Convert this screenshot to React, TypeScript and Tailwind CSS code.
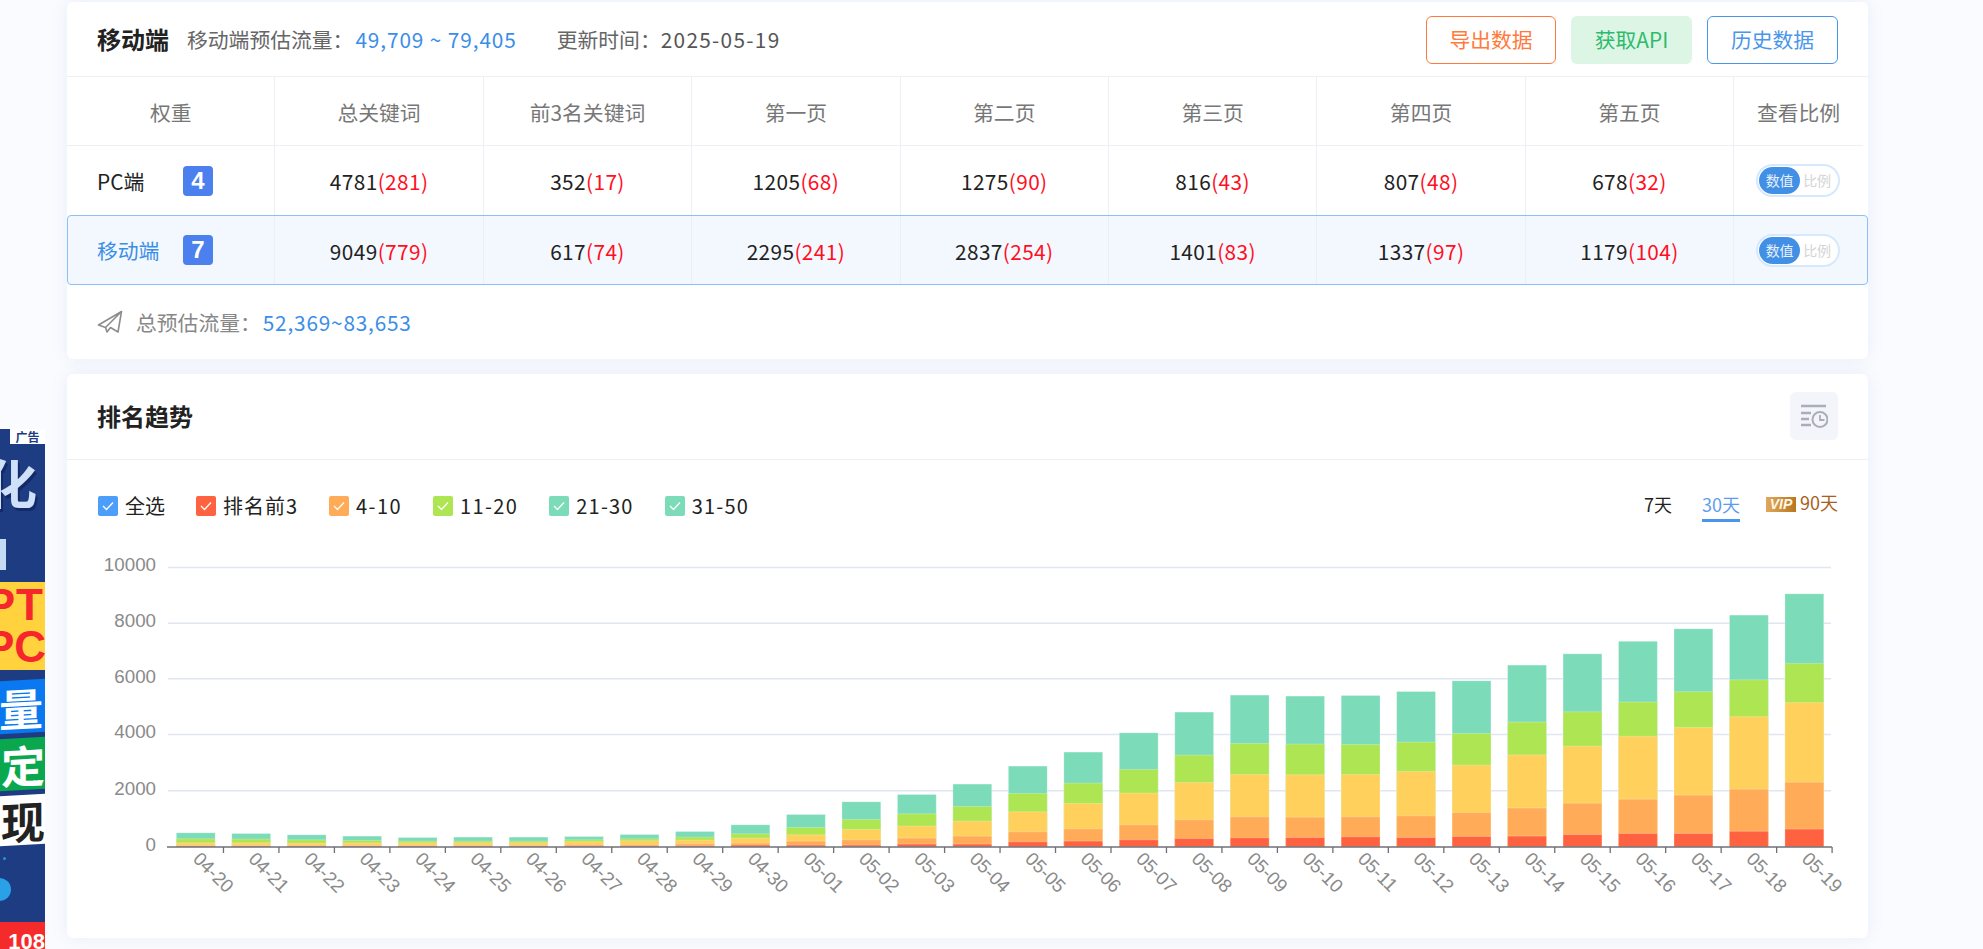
import type { ReactNode } from "react";

const FONT = "font-['Noto_Sans_CJK_SC','Liberation_Sans',sans-serif]";

const COLS = ["总关键词", "前3名关键词", "第一页", "第二页", "第三页", "第四页", "第五页"];

const ROWS = [
  {
    name: "PC端",
    weight: "4",
    active: false,
    cells: [["4781", "281"], ["352", "17"], ["1205", "68"], ["1275", "90"], ["816", "43"], ["807", "48"], ["678", "32"]],
  },
  {
    name: "移动端",
    weight: "7",
    active: true,
    cells: [["9049", "779"], ["617", "74"], ["2295", "241"], ["2837", "254"], ["1401", "83"], ["1337", "97"], ["1179", "104"]],
  },
];

const LEGEND = [
  { label: "全选", box: "bg-[#4d9dfb]", track: "tracking-[0px]" },
  { label: "排名前3", box: "bg-[#ff6240]", track: "tracking-[1px]" },
  { label: "4-10", box: "bg-[#ffab58]", track: "tracking-[1.4px]" },
  { label: "11-20", box: "bg-[#aee552]", track: "tracking-[1.4px]" },
  { label: "21-30", box: "bg-[#7cdbb9]", track: "tracking-[1.2px]" },
  { label: "31-50", box: "bg-[#7cdbb9]", track: "tracking-[1.2px]" },
];

const DATES = [
  "04-20", "04-21", "04-22", "04-23", "04-24", "04-25", "04-26", "04-27", "04-28", "04-29", "04-30",
  "05-01", "05-02", "05-03", "05-04", "05-05", "05-06", "05-07", "05-08", "05-09", "05-10", "05-11",
  "05-12", "05-13", "05-14", "05-15", "05-16", "05-17", "05-18", "05-19",
];

// stacked heights in px, top of the stack first: teal, green, yellow, orange, red
const BARS = [
  [14, 8, 4, 1.5, 0.5], [13.3, 7.7, 4, 1.5, 0.5], [12, 7, 3.7, 1.5, 0.5], [10.7, 6.3, 4, 1.5, 0.5],
  [9.3, 5.7, 4, 1.5, 0.5], [9.7, 5.7, 4, 1.5, 0.5], [9.7, 5.7, 4, 1.5, 0.5], [10.3, 7, 5, 2.3, 0.7],
  [12.3, 8, 6, 2.3, 0.7], [15.3, 9.7, 6.7, 3, 1], [22, 13, 8.7, 3.7, 1.7], [32.3, 19.3, 12, 5.7, 1.7],
  [45, 27.3, 17.3, 7, 1.7], [52.3, 33, 20.7, 8.7, 2.7], [62.7, 40.3, 25.7, 10.7, 2.7], [80.7, 53.3, 35, 15, 5],
  [94.7, 63.7, 43.3, 18, 5.7], [114, 77.3, 53.7, 22, 7], [134.7, 91.7, 64.3, 27, 8.3], [151.7, 103.3, 72.3, 30, 9],
  [150.7, 102.7, 72, 29.7, 9.3], [151.3, 102.3, 72.3, 30, 10], [155.3, 104.7, 75.3, 31, 9.3], [166, 113.3, 81.7, 34.3, 10.3],
  [181.7, 124.8, 91.9, 38.8, 10.7], [193, 135, 100.6, 43.6, 12.2], [205.5, 144.8, 110.5, 47.6, 13.3],
  [218, 155.1, 119.3, 51.7, 13.3], [231.7, 167, 130.1, 57.6, 15.5], [253, 183.4, 144.2, 64.6, 17.7],
];
const BAR_COLORS = ["#7cdbb9", "#aee552", "#ffd05b", "#ffab58", "#ff6240"];

const Y_TICKS = [
  { label: "10000", y: 567.4 },
  { label: "8000", y: 623.2 },
  { label: "6000", y: 678.8 },
  { label: "4000", y: 734.4 },
  { label: "2000", y: 790.8 },
  { label: "0", y: 846.8 },
];

function Cell({ children, last }: { children: ReactNode; last?: boolean }) {
  return (
    <div className={`flex items-center justify-center pt-[3px] ${last ? "" : "border-r border-[#eceff4]"}`}>{children}</div>
  );
}

function Toggle() {
  return (
    <div className="flex h-[33px] w-[84px] items-center rounded-full border-2 border-[#d6e8fb] bg-white pl-[1px]">
      <span className="flex h-[27px] w-[41px] items-center justify-center rounded-full bg-[#4290e5] text-[14px] text-[#e8f1fc]">
        数值
      </span>
      <span className="ml-[3px] text-[14px] text-[#d4d4d4]">比例</span>
    </div>
  );
}

function PlaneIcon() {
  return (
    <svg width="26" height="26" viewBox="0 0 26 26" fill="none" stroke="#8c8c8c" strokeWidth="1.6" strokeLinejoin="round">
      <path d="M24.5 2.5 1.5 16l7 2.5L24.5 2.5Z" />
      <path d="M24.5 2.5 21 23l-7.5-4.5-3.5 4.5-1.5-4.5" />
    </svg>
  );
}

function HistoryIcon() {
  return (
    <svg width="28" height="24" viewBox="0 0 28 24" fill="none" stroke="#a9aeb8" strokeWidth="2.4">
      <path d="M1 2h25M1 9h10M1 15h8M1 21h10" />
      <circle cx="20" cy="15.5" r="7.5" strokeWidth="2" />
      <path d="M20 11v5h4.5" strokeWidth="1.8" />
    </svg>
  );
}

function Check() {
  return (
    <svg width="12" height="10" viewBox="0 0 12 10" fill="none" stroke="#fff" strokeWidth="1.3">
      <path d="M1 5l3.5 3.5L11 1.5" />
    </svg>
  );
}

function Ad() {
  return (
    <aside className="mt-[429px] flex h-[520px] w-[45px] shrink-0 flex-col overflow-hidden bg-[#1e3c82] font-['Noto_Sans_CJK_SC',sans-serif] font-bold">
      <div className="flex h-[15px] justify-end">
        <span className="flex w-[35px] items-center justify-center bg-white text-[12px] leading-none text-[#1e3c82]">
          广告
        </span>
      </div>
      <div className="relative h-[138px]">
        <span className="absolute right-[8px] top-[8px] text-[52px] leading-[60px] text-[#cfe1f8] [text-shadow:2px_3px_0_#14296a]">
          化
        </span>
        <div className="absolute left-0 top-[95px] h-[31px] w-[6px] bg-[#c4daf5]" />
      </div>
      <div className="flex h-[88px] flex-col items-end justify-center bg-[#ffd23e] font-['Liberation_Sans',sans-serif] text-[44px] leading-[42px] text-[#f5262c]">
        <span className="mr-[1px] tracking-[1px]">PT</span>
        <span className="-mr-[1px]">PC</span>
      </div>
      <div className="mt-[10px] flex h-[53px] -skew-y-3 items-center justify-end bg-[#0a78f0] pr-[2px] text-[44px] leading-none text-white">
        量
      </div>
      <div className="mt-[5px] flex h-[52px] -skew-y-3 items-center justify-end bg-[#0aa84e] text-[44px] leading-none text-white">
        定
      </div>
      <div className="mt-[5px] flex h-[50px] -skew-y-3 items-center justify-end bg-white text-[44px] leading-none text-[#222]">
        现
      </div>
      <div className="relative flex-1">
        <div className="absolute -left-[12px] top-[33px] size-[23px] rounded-full bg-[#2aa0e6]" />
        <div className="absolute left-[3px] top-[12px] size-[3px] rounded-full bg-[#2e8fd8]" />
      </div>
      <div className="flex h-[27px] items-start justify-end overflow-hidden bg-[#f52a2a] pt-[9px] font-['Liberation_Sans',sans-serif] text-[22px] leading-none text-white">
        108
      </div>
    </aside>
  );
}

function Chart() {
  const step = 55.47;
  const barW = 38.8;
  return (
    <svg width="1801" height="398" viewBox="67 540 1801 398" className="block">
      {Y_TICKS.slice(0, 5).map((t) => (
        <line key={t.label} x1="168" x2="1831" y1={t.y} y2={t.y} stroke="#e0e6f1" strokeWidth="1.5" />
      ))}
      {Y_TICKS.map((t) => (
        <text key={t.label} x="156" y={t.y + 4} textAnchor="end" fontFamily="Liberation Sans" fontSize="18.75" fill="#8a8a8a">
          {t.label}
        </text>
      ))}
      {BARS.map((bar, i) => (
        <g key={DATES[i]}>
          {bar.map((h, s) => (
            <rect
              key={s}
              x={168 + i * step + (step - barW) / 2}
              y={846.8 - h}
              width={barW}
              height={h}
              fill={BAR_COLORS[s]}
              stroke="#fff"
              strokeOpacity="0.25"
            />
          ))}
        </g>
      ))}
      <line x1="167" x2="1832" y1="847" y2="847" stroke="#6e7079" strokeWidth="1.3" />
      {DATES.map((d, i) => (
        <line key={d} x1={168 + (i + 1) * step} x2={168 + (i + 1) * step} y1="847" y2="853" stroke="#6e7079" strokeWidth="1.3" />
      ))}
      {DATES.map((d, i) => {
        const x = 168 + i * step + 24;
        return (
          <text key={d} x={x} y="860" transform={`rotate(45 ${x} 860)`} fontFamily="Liberation Sans" fontSize="18.75" fill="#8a8a8a">
            {d}
          </text>
        );
      })}
    </svg>
  );
}

export default function App() {
  return (
    <div className={`flex h-[949px] w-[1983px] overflow-hidden bg-[#fafbfe] ${FONT}`}>
      <Ad />
      <main className="ml-[22px] flex w-[1801px] shrink-0 flex-col gap-[15px] pt-[2px]">
        {/* traffic table */}
        <section className="h-[357px] rounded-[6px] bg-white shadow-[0_0_16px_rgba(90,140,210,0.12)]">
          <div className="flex h-[75px] items-center border-b border-[#eceff4] px-[30px] pt-[2px] text-[20.8px]">
            <h2 className="-mt-[2px] text-[24px] font-bold text-[#222]">移动端</h2>
            <span className="ml-[18px] mr-[2px] text-[#666]">移动端预估流量：</span>
            <span className="tracking-[0.9px] text-[#3b8ee8]">49,709 ~ 79,405</span>
            <span className="ml-[40px] text-[#666]">更新时间：</span>
            <span className="tracking-[1.3px] text-[#555]">2025-05-19</span>
            <div className="ml-auto flex gap-[15px]">
              <button className="h-[48px] w-[130px] rounded-[6px] border border-[#ff7a3d] text-[#ff7a3d]">导出数据</button>
              <button className="h-[48px] w-[121px] rounded-[6px] bg-[#dcf5e5] text-[#2dbb6b]">获取API</button>
              <button className="h-[48px] w-[131px] rounded-[6px] border border-[#4a96ea] text-[#4a96ea]">历史数据</button>
            </div>
          </div>

          <div className="grid h-[69px] w-[1796px] grid-cols-[repeat(8,208.4px)_1fr] border-b border-[#eceff4] text-[20.8px] text-[#777]">
            <Cell>权重</Cell>
            {COLS.map((c) => (
              <Cell key={c}>{c}</Cell>
            ))}
            <Cell last>查看比例</Cell>
          </div>

          {ROWS.map((r) => (
            <div
              key={r.name}
              className={`grid text-[20.8px] ${
                r.active
                  ? "h-[70px] w-[1801px] grid-cols-[207.4px_repeat(7,208.4px)_1fr] rounded-[4px] border border-[#8cc0f5] bg-[#f3f8fe]"
                  : "h-[69px] w-[1796px] grid-cols-[repeat(8,208.4px)_1fr]"
              }`}
            >
              <div className={`flex items-center border-r border-[#eceff4] ${r.active ? "pl-[29px]" : "pl-[30px]"}`}>
                <span className={`mt-[2px] w-[86px] ${r.active ? "text-[#3b8ee8]" : "text-[#222]"}`}>{r.name}</span>
                <span className="flex size-[30px] items-center justify-center rounded-[4px] bg-[#4b80ee] font-['Liberation_Sans',sans-serif] text-[24px] font-bold text-white">
                  {r.weight}
                </span>
              </div>
              {r.cells.map(([a, b], i) => (
                <Cell key={i}>
                  <span className="tracking-[0.4px] text-[#222]">{a}</span>
                  <span className="tracking-[0.4px] text-[#ff0f1f]">({b})</span>
                </Cell>
              ))}
              <div className="flex items-center pl-[22px]">
                <Toggle />
              </div>
            </div>
          ))}

          <div className="flex h-[74px] items-center px-[30px] text-[20.8px]">
            <PlaneIcon />
            <span className="ml-[13px] mr-[2px] mt-[2px] text-[#888]">总预估流量：</span>
            <span className="mt-[2px] tracking-[0.8px] text-[#3b8ee8]">52,369~83,653</span>
          </div>
        </section>

        {/* ranking trend */}
        <section className="h-[564px] rounded-[6px] bg-white shadow-[0_0_16px_rgba(90,140,210,0.12)]">
          <div className="flex h-[86px] items-center justify-between border-b border-[#eceff4] pl-[30px] pr-[30px]">
            <h2 className="-mt-[1px] text-[24px] font-bold text-[#222]">排名趋势</h2>
            <div className="-mt-[1px] flex size-[48px] items-center justify-center rounded-[6px] bg-[#f3f5fa]">
              <HistoryIcon />
            </div>
          </div>

          <div className="flex h-[80px] items-center justify-between pl-[31px] pr-[30px] pt-[12px]">
            <div className="flex gap-[31px]">
              {LEGEND.map((l) => (
                <label key={l.label} className={`flex items-center gap-[7px] text-[20px] text-[#222] ${l.track}`}>
                  <span className={`flex size-[20px] items-center justify-center rounded-[2px] ${l.box}`}>
                    <Check />
                  </span>
                  {l.label}
                </label>
              ))}
            </div>
            <div className="flex items-start text-[18px] leading-[26px]">
              <span className="text-[#222]">7天</span>
              <span className="ml-[30px] border-b-[3px] border-[#4a96ea] pb-[2px] text-[#5c9df0]">30天</span>
              <span className="ml-[26px] mt-[6px] flex h-[15px] w-[30px] items-center justify-center bg-gradient-to-r from-[#e0a85a] to-[#b9771e] font-['Liberation_Sans',sans-serif] text-[14px] font-bold italic leading-none text-[#fff7e6]">
                VIP
              </span>
              <span className="ml-[4px] -mt-[2px] text-[#a8601c]">90天</span>
            </div>
          </div>

          <Chart />
        </section>
      </main>
    </div>
  );
}
